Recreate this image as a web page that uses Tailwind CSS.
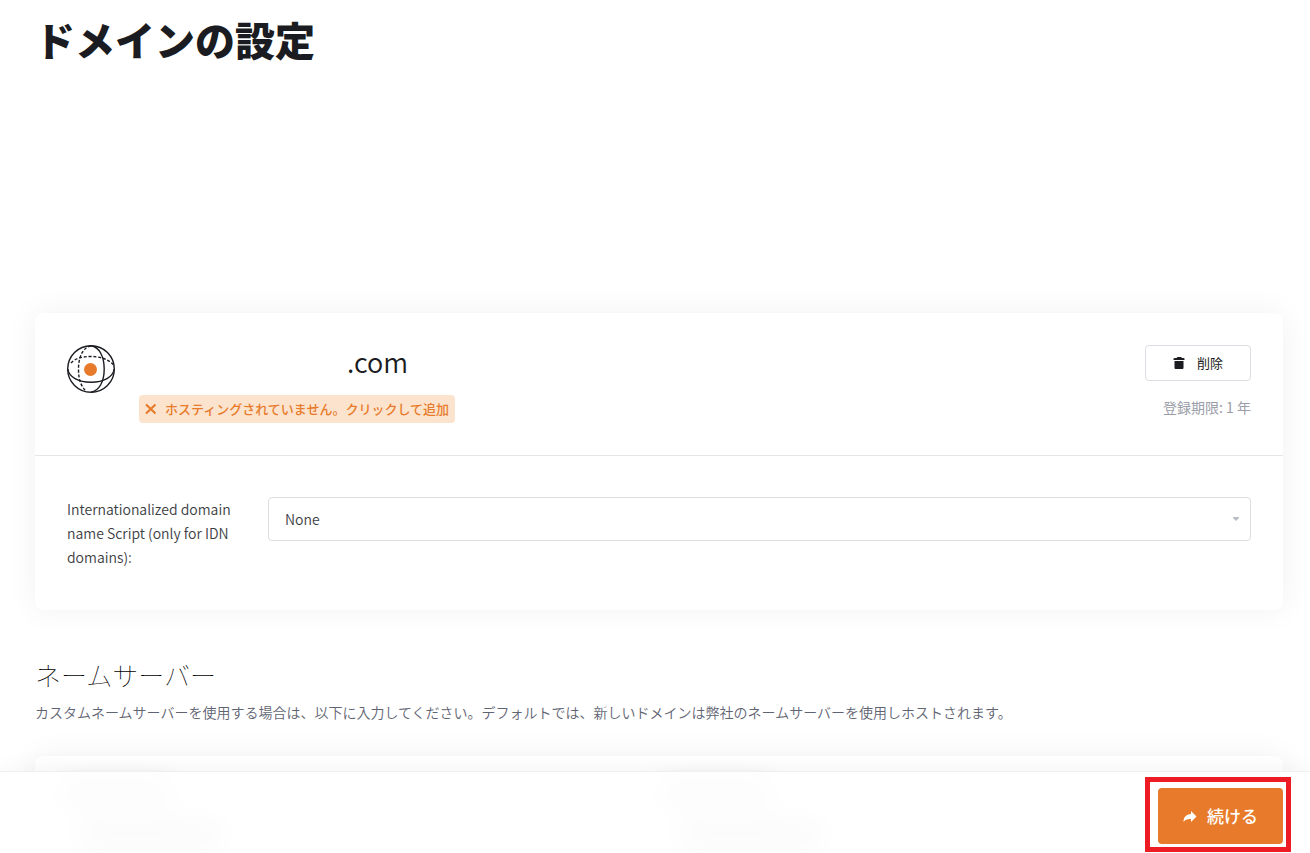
<!DOCTYPE html>
<html lang="ja">
<head>
    <meta charset="UTF-8">
    <meta name="viewport" content="width=device-width, initial-scale=1.0">
    <title>ドメインの設定</title>
    <script src="https://cdn.jsdelivr.net/npm/@tailwindcss/browser@4"></script>
</head>
<body class="bg-white font-['Noto_Sans_CJK_JP',sans-serif] text-[#1a1c21]">
    <div class="relative h-screen overflow-hidden">
        <main class="pl-[35px] pr-[27px] pt-[9px]">
            <h1 class="text-[40px] leading-[60px] font-black">ドメインの設定</h1>

            <!-- Domain card -->
            <section class="mt-[244px] rounded-lg bg-white shadow-[0_0_32px_rgba(0,0,0,0.06)]">
                <div class="flex items-start justify-between border-b border-[#e5e6e9] p-8">
                    <div class="flex items-start gap-6">
                        <svg class="h-12 w-12" viewBox="0 0 48 48" fill="none" stroke="#1a1c21" stroke-width="1.4">
                            <circle cx="24" cy="24" r="23.3"/>
                            <path d="M0.8 24C2 32 11 37.2 24 37.2S46 32 47.2 24"/>
                            <path d="M24 0.8C32 2 37.2 11 37.2 24S32 46 24 47.2"/>
                            <path d="M4 18C8 13.500 15 11.500 24 11.500S41 14 46 19.500" stroke-dasharray="3 1.800"/>
                            <path d="M24 0.800C15 3 11.500 13 11.500 24S14 41 19 46" stroke-dasharray="3 1.800"/>
                            <circle cx="23.500" cy="24.500" r="6.500" fill="#e87b2b" stroke="none"/>
                        </svg>
                        <div>
                            <h2 class="pl-[208px] text-[27px] leading-[34px] font-[350]">.com</h2>
                            <button type="button" class="mt-4 flex h-7 items-center gap-2 rounded-sm bg-[#fbe3cd] px-1.5 text-[13px] font-medium text-[#e87b2b]">
                                <svg class="h-3 w-3" viewBox="0 0 12 12" fill="none" stroke="currentColor" stroke-width="2.200">
                                    <path d="M1 1.500L10.500 10.500M10.500 1.500L1 10.500"/>
                                </svg>
                                ホスティングされていません。クリックして追加
                            </button>
                        </div>
                    </div>
                    <div class="flex flex-col items-end">
                        <button type="button" class="flex h-9 w-[106px] items-center justify-center gap-3 rounded-sm border border-[#dcdde2] text-[13px]">
                            <svg class="h-3 w-3" viewBox="0 0 12 12" fill="currentColor">
                                <path d="M0.500 3V1.500Q1 1 2 1H3.500L4.500 0H8L9 1H10.500Q11.500 1 11.500 1.500V3ZM1.500 4H10.500V11Q10.500 12 9.500 12H2.500Q1.500 12 1.500 11Z"/>
                            </svg>
                            削除
                        </button>
                        <p class="mt-3.5 text-sm leading-6 text-[#9b9ea9]">登録期限: 1 年</p>
                    </div>
                </div>
                <div class="flex items-start gap-8 px-8 pt-[41px] pb-[41px]">
                    <label for="idn-script" class="w-[169px] shrink-0 text-sm leading-6 font-[350] text-[#3c3e43]">Internationalized domain name Script (only for IDN domains):</label>
                    <div class="relative grow">
                        <select id="idn-script" class="h-11 w-full appearance-none rounded-sm border border-[#dcdde0] bg-white px-4 text-sm font-[350] text-[#3c3e43]">
                            <option>None</option>
                        </select>
                        <svg class="pointer-events-none absolute top-5 right-3 h-1 w-1.5" viewBox="0 0 6 4" fill="#b9bdc5"><path d="M0 0H6V1L3 4L0 1Z"/></svg>
                    </div>
                </div>
            </section>

            <!-- Nameservers -->
            <h2 class="mt-[45px] text-[26px] leading-10 font-thin text-black">ネームサーバー</h2>
            <p class="mt-[5px] text-sm leading-6 font-[350] text-[#5f6472]">カスタムネームサーバーを使用する場合は、以下に入力してください。デフォルトでは、新しいドメインは弊社のネームサーバーを使用しホストされます。</p>
            <section class="mt-8 grid h-60 grid-cols-2 rounded-lg bg-white px-6 pt-[30px] shadow-[0_0_32px_rgba(0,0,0,0.06)]">
                <div>
                    <div class="h-4 w-28 rounded-full bg-black/25 blur-md"></div>
                    <div class="mt-6 ml-5 h-4 w-36 rounded-full bg-black/35 blur-md"></div>
                </div>
                <div>
                    <div class="h-4 w-28 rounded-full bg-black/25 blur-md"></div>
                    <div class="mt-6 ml-5 h-4 w-36 rounded-full bg-black/35 blur-md"></div>
                </div>
            </section>
        </main>

        <!-- Sticky action bar -->
        <footer class="absolute inset-x-0 bottom-0 flex justify-end border-t border-[#f0f0f0] bg-white/90 pt-[5px] pr-[19px] pb-px shadow-[0_0_24px_rgba(0,0,0,0.05)] backdrop-blur-sm">
            <div class="border-5 border-[#ed1c24] pt-1.5 pr-[3px] pb-[3px] pl-2">
                <button type="button" class="flex h-14 w-[125px] items-center justify-center gap-2.5 rounded-sm bg-[#e87b2b] text-[17px] font-medium text-white">
                    <svg class="h-3.5 w-3.5" viewBox="0 0 14 14" fill="currentColor">
                        <path d="M8 2L13.500 7.500L8 13V10C4.500 9.800 2.500 10.500 0.500 13C0.500 8.500 3 5.300 8 5Z"/>
                    </svg>
                    続ける
                </button>
            </div>
        </footer>
    </div>
</body>
</html>
